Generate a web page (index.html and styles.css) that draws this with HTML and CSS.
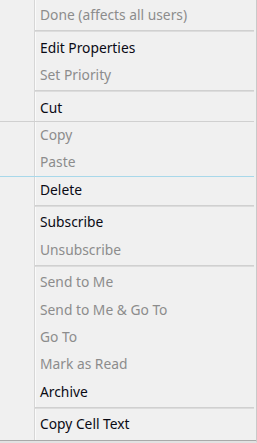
FILE: index.html
```html
<!DOCTYPE html>
<html>
<head>
<meta charset="utf-8">
<link rel="stylesheet" href="styles.css">
</head>
<body>
<div class="menu">
  <div class="gutter"></div>
  <ul class="list">
    <li class="item off">Done (affects all users)</li>
    <li class="sep"></li>
    <li class="item">Edit Properties</li>
    <li class="item off">Set Priority</li>
    <li class="sep"></li>
    <li class="item">Cut</li>
    <li class="item off">Copy</li>
    <li class="item off">Paste</li>
    <li class="item">Delete</li>
    <li class="sep"></li>
    <li class="item">Subscribe</li>
    <li class="item off">Unsubscribe</li>
    <li class="sep"></li>
    <li class="item off">Send to Me</li>
    <li class="item off">Send to Me &amp; Go To</li>
    <li class="item off">Go To</li>
    <li class="item off">Mark as Read</li>
    <li class="item">Archive</li>
    <li class="sep"></li>
    <li class="item">Copy Cell Text</li>
  </ul>
  <div class="grid-line gray"></div>
  <div class="grid-line blue"></div>
</div>
</body>
</html>
```

FILE: styles.css
```css
html, body {
  margin: 0;
  padding: 0;
  background: #f0f0f0;
}
.menu {
  position: relative;
  box-sizing: border-box;
  width: 257px;
  height: 443px;
  display: flex;
  background: #f0f0f0;
  border-right: 1px solid #c9c9c9;
  border-bottom: 2px solid #e2e2e2;
}
.menu::after {
  content: "";
  position: absolute;
  left: 0;
  right: 0;
  bottom: 0;
  height: 1px;
  background: #a9a9a9;
}
.gutter {
  width: 34px;
  flex: none;
}
.list {
  flex: 1;
  margin: 0;
  padding: 1px 2px 0 0;
  list-style: none;
  border-left: 1px solid #d6d6d6;
  box-shadow: inset 1px 0 0 #fafafa;
  font-family: "Noto Sans", "Open Sans", sans-serif;
  font-size: 13.8px;
  color: #0a0a14;
}
.item {
  height: 27.4px;
  line-height: 27.4px;
  padding-left: 5px;
  white-space: nowrap;
}
.item.off {
  color: #8c8c8c;
}
.sep {
  height: 5.2px;
  display: flex;
  flex-direction: column;
  justify-content: center;
}
.sep::before {
  content: "";
  height: 1px;
  background: #d0d0d0;
  border-bottom: 1px solid #dcdcdc;
}
.grid-line {
  position: absolute;
  left: 0;
  right: 2px;
  height: 1px;
}
.grid-line.gray {
  top: 121px;
  background: #d0d0d0;
}
.grid-line.blue {
  top: 176px;
  background: #a8d8ea;
}
```
